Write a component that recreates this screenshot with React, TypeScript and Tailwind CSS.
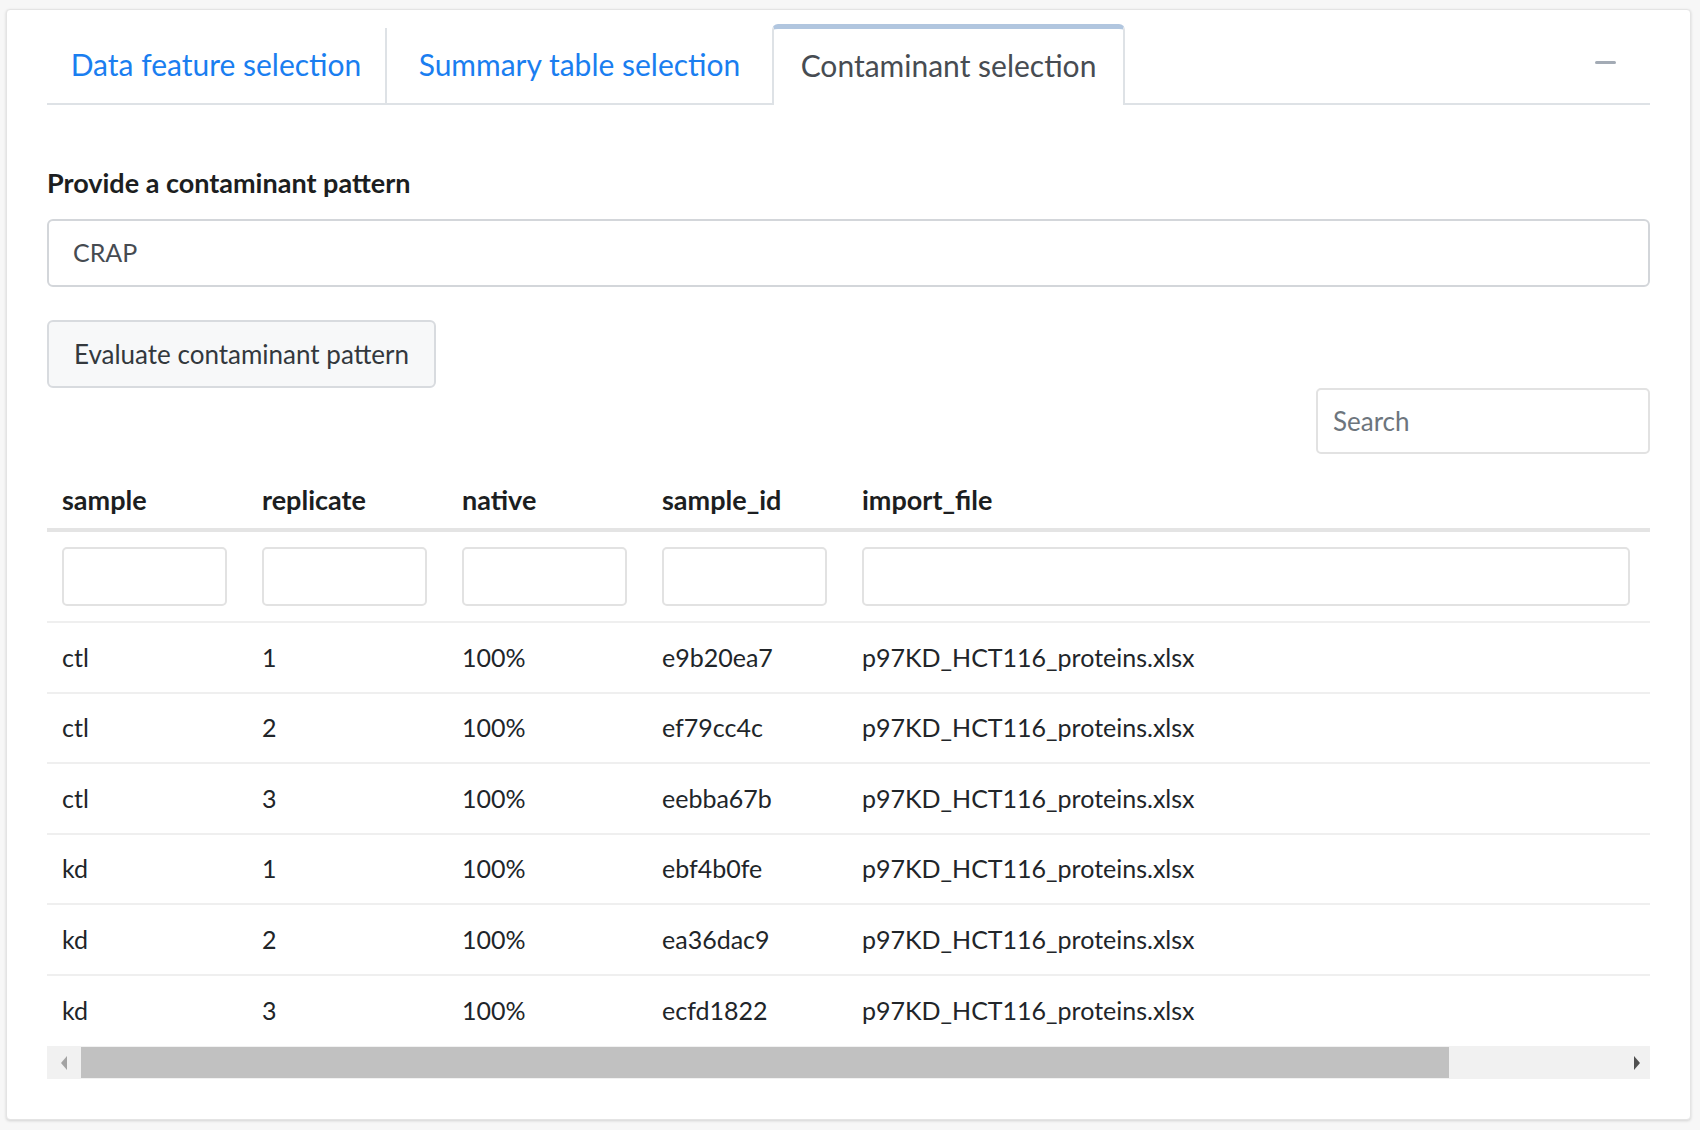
import React from 'react';

const rows = [
  { sample: 'ctl', replicate: '1', native: '100%', id: 'e9b20ea7' },
  { sample: 'ctl', replicate: '2', native: '100%', id: 'ef79cc4c' },
  { sample: 'ctl', replicate: '3', native: '100%', id: 'eebba67b' },
  { sample: 'kd', replicate: '1', native: '100%', id: 'ebf4b0fe' },
  { sample: 'kd', replicate: '2', native: '100%', id: 'ea36dac9' },
  { sample: 'kd', replicate: '3', native: '100%', id: 'ecfd1822' },
];

const columns = ['sample', 'replicate', 'native', 'sample_id', 'import_file'];

const App: React.FC = () => {
  return (
    <div className="min-h-[1130px] w-[1700px] bg-[#f7f7f7] pt-[9px] pl-[6px] font-['Lato',sans-serif]">
      <div className="w-[1685px] h-[1111px] bg-white rounded-[4px] border border-[#e4e4e4] shadow-[0_1px_3px_rgba(0,0,0,0.15)] px-[40px] pt-[14px]">
        {/* Tabs */}
        <div className="flex items-end h-[81px] border-b-2 border-[#dee2e6]">
          <div className="w-[340px] h-[77px] pb-[4px] flex items-center justify-center border-r-2 border-[#dee2e6] text-[30px] text-[#1a7ef0] -mb-[2px]">
            Data feature selection
          </div>
          <div className="w-[385px] h-[77px] pb-[4px] flex items-center justify-center text-[30px] text-[#1a7ef0] -mb-[2px]">
            Summary table selection
          </div>
          <div className="w-[353px] h-[81px] pb-[3px] -mb-[2px] flex items-center justify-center bg-white border-x-2 border-[#dee2e6] border-t-[5px] border-t-[#b1c6df] rounded-t-[6px] text-[30px] text-[#474c52]">
            Contaminant selection
          </div>
          <div className="flex-1 h-[77px] pb-[4px] flex items-center justify-end pr-[34px]">
            <div className="w-[21px] h-[3px] bg-[#a3abb5] rounded-full" />
          </div>
        </div>

        {/* Pattern input */}
        <div className="mt-[64px] text-[27px] font-bold text-[#1c1e21] leading-none">Provide a contaminant pattern</div>
        <div className="mt-[23px] h-[68px] border-2 border-[#d3d6da] rounded-[6px] flex items-center px-[24px] text-[25px] text-[#464b51]">
          CRAP
        </div>
        <div className="mt-[33px] w-[389px] h-[68px] border-2 border-[#d8dbdf] bg-[#f7f8f9] rounded-[6px] flex items-center justify-center text-[26px] text-[#33383d]">
          Evaluate contaminant pattern
        </div>

        {/* Search */}
        <div className="flex justify-end">
          <div className="w-[334px] h-[66px] border-2 border-[#e2e2e2] rounded-[5px] flex items-center px-[15px] text-[26px] text-[#6d757d]">
            Search
          </div>
        </div>

        {/* Table */}
        <div className="mt-[19px]">
          <div className="grid grid-cols-[200px_200px_200px_200px_1fr] h-[59px] items-center border-b-[4px] border-[#e4e4e4]">
            {columns.map((c) => (
              <div key={c} className="pl-[15px] text-[27px] font-bold text-[#1c1e21]">{c}</div>
            ))}
          </div>
          <div className="grid grid-cols-[200px_200px_200px_200px_1fr] h-[91px] items-center border-b-2 border-[#efefef]">
            {columns.map((c) => (
              <div key={c} className="pl-[15px] pr-[20px]">
                <div className="h-[59px] border-2 border-[#e2e2e2] rounded-[5px] bg-white" />
              </div>
            ))}
          </div>
          {rows.map((r, i) => (
            <div
              key={r.id}
              className={`grid grid-cols-[200px_200px_200px_200px_1fr] h-[70.5px] items-center text-[25px] text-[#212529] ${
                i < rows.length - 1 ? 'border-b-2 border-[#efefef]' : ''
              }`}
            >
              <div className="pl-[15px]">{r.sample}</div>
              <div className="pl-[15px]">{r.replicate}</div>
              <div className="pl-[15px]">{r.native}</div>
              <div className="pl-[15px]">{r.id}</div>
              <div className="pl-[15px]">p97KD_HCT116_proteins.xlsx</div>
            </div>
          ))}
          {/* Horizontal scrollbar */}
          <div className="h-[33px] bg-[#f1f1f1] flex items-center">
            <div className="w-[34px] h-full flex items-center justify-center">
              <svg width="10" height="16" viewBox="0 0 10 16">
                <polygon points="8,1 2,8 8,15" fill="#a3a3a3" />
              </svg>
            </div>
            <div className="w-[1368px] h-[31px] bg-[#c1c1c1]" />
            <div className="flex-1 h-full flex items-center justify-end pr-[8px]">
              <svg width="10" height="16" viewBox="0 0 10 16">
                <polygon points="2,1 8,8 2,15" fill="#505050" />
              </svg>
            </div>
          </div>
        </div>
      </div>
    </div>
  );
};

export default App;
